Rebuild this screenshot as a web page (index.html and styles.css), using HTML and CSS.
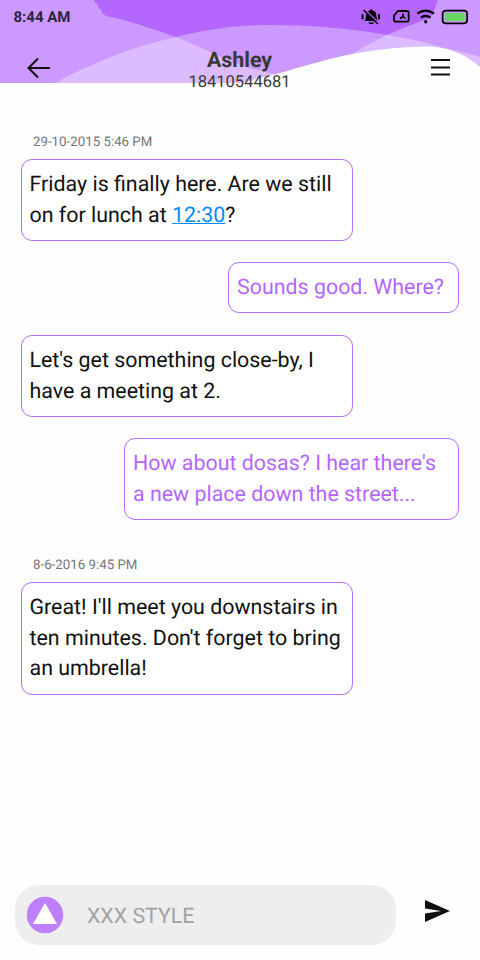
FILE: index.html
```html
<!DOCTYPE html>
<html lang="en">
<head>
<meta charset="utf-8">
<title>Ashley</title>
<link rel="stylesheet" href="styles.css">
</head>
<body>
<div class="screen">
  <header class="header">
    <svg class="waves" viewBox="0 0 480 84" aria-hidden="true">
      <rect width="480" height="83" fill="#b566ff"/>
      <path d="M0 0H94L95 3H97L98 6L99 9H101L102 13L105 15.500C130 21 153 29 176 37C200 47 224 58 246 68L280 74L240 83H0Z" fill="#cc99ff"/>
      <path d="M438 0L436 5L434 11L430 18C415 23 400 29 387 35C370 43 358 50 346 58L480 83V0Z" fill="#cc99ff"/>
      <path d="M55 83C96 61 135 46 176 37C207 29 238 25 270 25C310 25 348 28 387 35C420 41 450 49 480 57V83Z" fill="#cc99ff"/>
      <path d="M55 83C96 61 135 46 176 37C200 47 224 59 246 67L278 75L240 84Z" fill="#ddbbff"/>
      <path d="M387 35C407 38 425 42 441 47L430 60H343C358 50 370 43 387 35Z" fill="#ddbbff"/>
      <path d="M441 47C455 50 468 53 480 57V68Z" fill="#ddbbff"/>
      <path d="M0 83H240L278 73.500C305 66 330 58 355 53.500C380 49 405 46.500 430 46.500C450 47.500 468 56 480 67V84H0Z" fill="#fefefe"/>
    </svg>
    <div class="status">
      <span class="clock">8:44 AM</span>
      <svg class="status-icons" width="108" height="20" viewBox="0 0 108 20" aria-hidden="true">
        <path d="M4.500 14C6.500 12 5.500 9 6.500 6Q7.500 3.500 10 3.500V2.500H12.500V3.500Q16 4 16.300 8Q16.500 12 18 14ZM8 15.500H14.500Q13.500 17.300 11.200 17.300Q9 17.300 8 15.500Z"/>
        <path d="M2.500 8V11.500M19 8V11.500" fill="none" stroke="#000" stroke-width="2" stroke-linecap="round"/>
        <path d="M4 2L19.500 16.500" stroke="#b566ff" stroke-width="1.500"/>
        <path d="M3.500 3L18 17" stroke="#000" stroke-width="1.500"/>
        <path d="M38 4H46.500Q48.700 4 48.700 6V12.700Q48.700 14.700 46.500 14.700H36.200Q34 14.700 34 12.700V8.500Z" fill="none" stroke="#000" stroke-width="1.800"/>
        <path d="M40 11.500L43 9.500V6.500M43 9.500L45.500 11.500" fill="none" stroke="#000" stroke-width="1.600"/>
        <path d="M57.300 6.700Q65.500 0.500 74 6.700M61 10.700Q65.500 7 70.500 10.700" fill="none" stroke="#000" stroke-width="2.200"/>
        <circle cx="65.700" cy="14.700" r="1.700"/>
        <rect x="82.600" y="3.600" width="24.500" height="12.700" rx="3" fill="#cc99ff" stroke="#000" stroke-width="1.700"/>
        <rect x="85" y="6" width="19.700" height="8" rx="1" fill="#67d662"/>
      </svg>
    </div>
    <div class="titlebar">
      <svg class="back" width="24" height="22" viewBox="0 0 24 22" aria-hidden="true"><path d="M11 1.500L1.500 11L11 20.500M1.500 11H23" fill="none" stroke="#111" stroke-width="2"/></svg>
      <div class="contact"><h1 class="name">Ashley</h1><div class="phone">18410544681</div></div>
      <svg class="menu" width="19" height="19" viewBox="0 0 19 19" aria-hidden="true"><path d="M0 2H19M0 9.500H19M0 16.500H19" stroke="#111" stroke-width="2"/></svg>
    </div>
  </header>
  <main class="thread">
    <div class="date">29-10-2015 5:46 PM</div>
    <div class="bubble in">Friday is finally here. Are we still<br>on for lunch at <a class="time" href="#">12:30</a>?</div>
    <div class="bubble out short">Sounds good. Where?</div>
    <div class="bubble in">Let's get something close-by, I<br>have a meeting at 2.</div>
    <div class="bubble out">How about dosas? I hear there's<br>a new place down the street...</div>
    <div class="date later">8-6-2016 9:45 PM</div>
    <div class="bubble in tall">Great! I'll meet you downstairs in<br>ten minutes. Don't forget to bring<br>an umbrella!</div>
  </main>
  <footer class="composer">
    <div class="field">
      <svg width="38" height="38" viewBox="0 0 38 38" aria-hidden="true"><circle cx="19" cy="19" r="18.300" fill="#bf80ff"/><path d="M19 7L31 28H7Z" fill="#fff"/></svg>
      <span class="placeholder">XXX STYLE</span>
    </div>
    <svg class="send" width="25" height="22" viewBox="0 0 25 22" aria-hidden="true"><path d="M0 0L25 11L0 22V13.500L16 11L0 8.500Z" fill="#111"/></svg>
  </footer>
</div>
</body>
</html>
```
FILE: styles.css
```css
* { box-sizing: border-box; }
body { margin: 0; background: #fefefe; font-family: Roboto, "Liberation Sans", sans-serif; color: #111; text-rendering: geometricPrecision; }
.screen { width: 480px; height: 960px; display: flex; flex-direction: column; overflow: hidden; background: #fefefe; }
.header { position: relative; height: 92px; flex: none; }
.waves { position: absolute; left: 0; top: 0; width: 480px; height: 84px; }
.status { position: relative; height: 34px; padding: 0 12px 0 13.5px; display: flex; justify-content: space-between; align-items: center; }
.clock { font-size: 15px; font-weight: 700; color: #2e2440; line-height: 20px; }
.status-icons { display: block; }
.titlebar { position: relative; height: 58px; padding: 0 30px 0 27px; display: flex; justify-content: space-between; align-items: flex-start; }
.back { margin-top: 23px; }
.menu { margin-top: 24px; }
.contact { padding-top: 14px; margin-right: 3px; text-align: center; color: #383838; }
.name { margin: 0; font-size: 21.4px; line-height: 26px; font-weight: 700; }
.phone { font-size: 16.5px; line-height: 18px; }
.thread { flex: 1; padding: 41px 21px 0; display: flex; flex-direction: column; }
.date { height: 20px; line-height: 20px; margin: 0 0 6px 12px; font-size: 13.3px; color: #777; }
.later { margin-top: 15px; }
.bubble { border: 1px solid #b76eff; border-radius: 11px; padding: 10px 8px 0 7.5px; font-size: 21.4px; line-height: 30.7px; white-space: nowrap; height: 82px; margin-bottom: 21px; background: #fff; }
.in { width: 332px; align-self: flex-start; }
.out { width: 335px; align-self: flex-end; color: #b566ff; padding-left: 8px; }
.short { width: 231px; height: 51px; margin-bottom: 22px; }
.tall { height: 113px; }
.time { color: #008cff; text-decoration: underline; text-decoration-thickness: 1px; }
.composer { height: 75px; flex: none; padding-left: 15px; display: flex; align-items: flex-start; }
.field { width: 381px; height: 60px; padding-left: 11px; border-radius: 24px; background: #eee; display: flex; align-items: center; }
.placeholder { margin-left: 23px; padding-top: 2px; font-size: 21.33px; color: #a2a2a2; }
.send { margin: 15px 0 0 29px; }
```
